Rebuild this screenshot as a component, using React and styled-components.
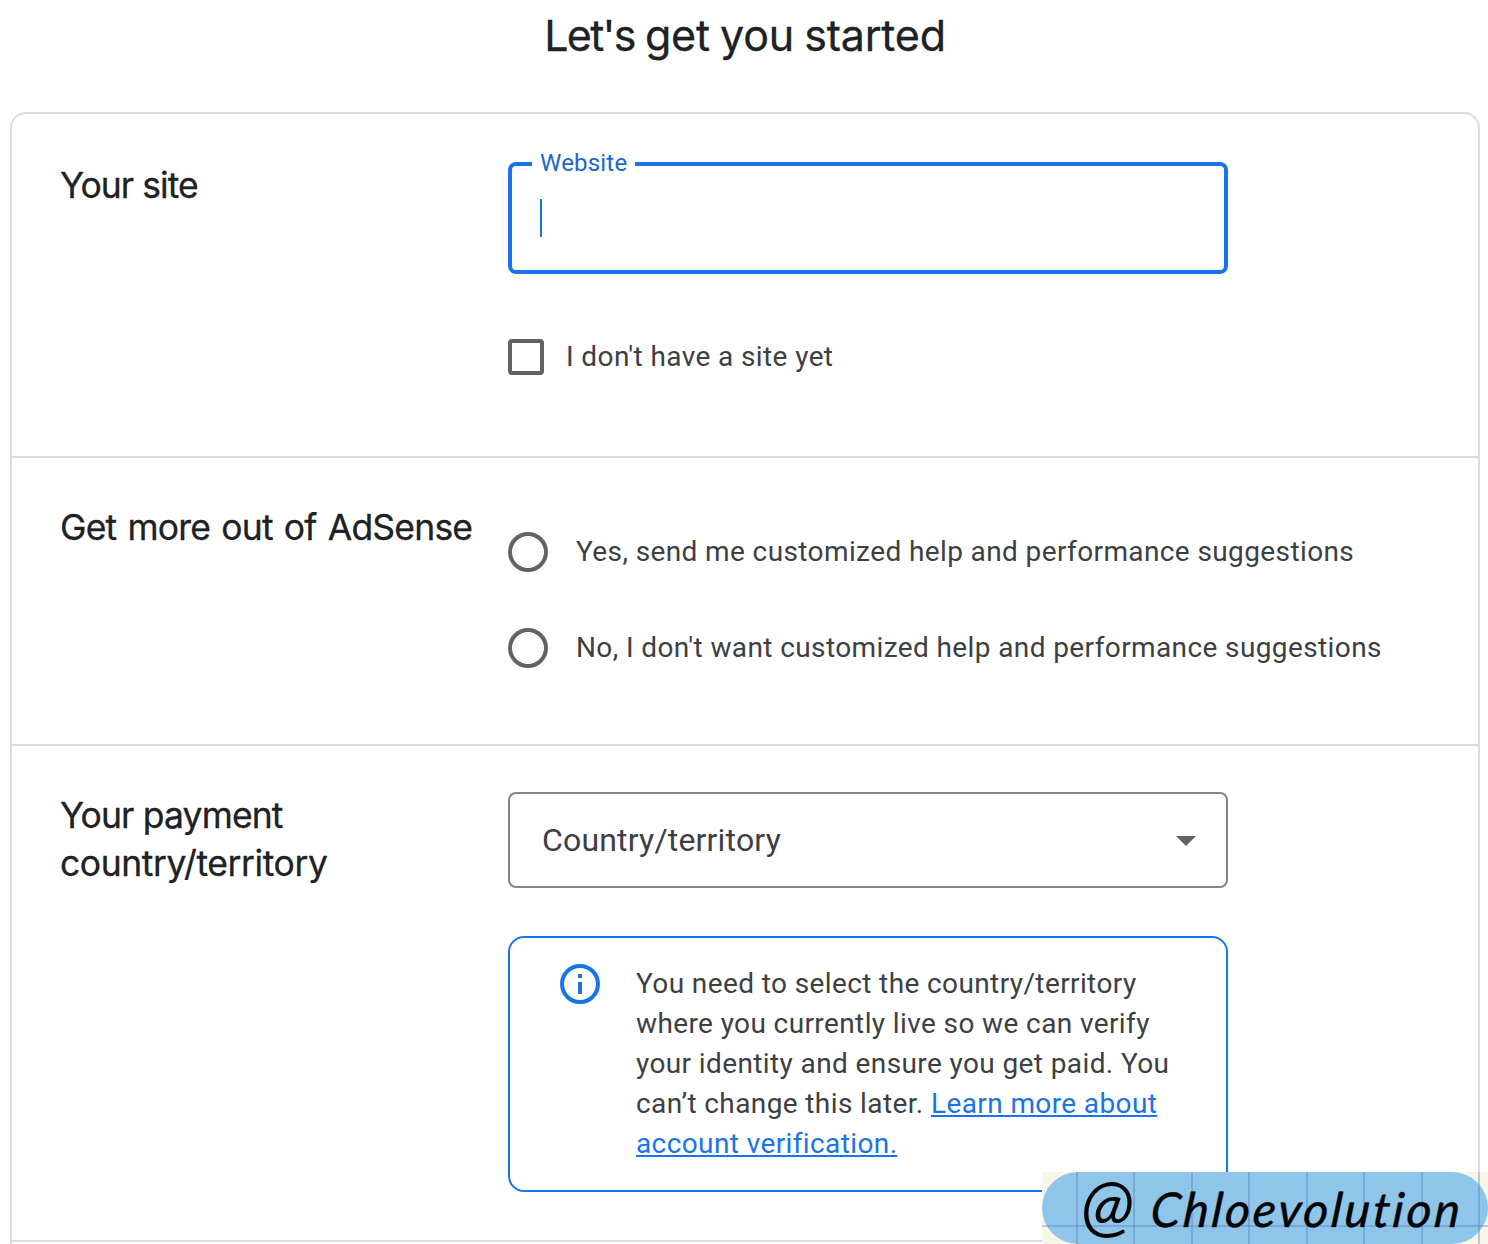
import React from "react";
import styled, { createGlobalStyle } from "styled-components";

const GlobalStyle = createGlobalStyle`
  *, *::before, *::after { box-sizing: border-box; }
  html, body { margin: 0; background: #fff; overflow: hidden; }
  body { font-family: Roboto, "Liberation Sans", sans-serif; color: #3c4043; }
`;

const Page = styled.main`
  position: relative;
  width: 1488px;
  height: 1244px;
  padding: 0 8px 0 10px;
  overflow: hidden;
`;

const Title = styled.h1`
  height: 112px;
  margin: 0;
  padding-top: 7px;
  text-align: center;
  font: 400 43px/56px Inter, "Open Sans", sans-serif;
  letter-spacing: -0.2px;
  word-spacing: -1.7px;
  color: #202124;
  -webkit-text-stroke: 0.3px #202124;
`;

const TightStart = styled.span`
  letter-spacing: -1.7px;
`;

const Card = styled.div`
  border: 2px solid #dadce0;
  border-radius: 16px;
  height: 1200px;
`;

const Section = styled.section`
  display: grid;
  grid-template-columns: 448px 1fr;
  height: ${(p) => p.$height}px;
  padding: 46px 0 0 48px;
  border-bottom: 2px solid #dadce0;
`;

const Heading = styled.h2`
  margin: 0;
  padding-top: ${(p) => p.$top || 0}px;
  font: 400 35.5px/48px Inter, "Open Sans", sans-serif;
  color: #202124;
  -webkit-text-stroke: 0.3px #202124;
`;

const HeadingLine = styled.span`
  display: block;
  white-space: nowrap;
  letter-spacing: ${(p) => p.$spacing}px;
  word-spacing: ${(p) => p.$words || 0}px;
`;

const Controls = styled.div`
  display: flex;
  flex-direction: column;
  align-items: flex-start;
  padding-top: ${(p) => p.$top || 0}px;
`;

const TextField = styled.div`
  position: relative;
  display: flex;
  align-items: center;
  width: 720px;
  height: 112px;
  padding-left: 28px;
  border: 4px solid #1a73e8;
  border-radius: 8px;
`;

const FloatingLabel = styled.label`
  position: absolute;
  left: 20px;
  top: -17px;
  width: 103px;
  padding-left: 8px;
  background: #fff;
  color: #1967d2;
  font-size: 24px;
  line-height: 28px;
  letter-spacing: 0.2px;
`;

const Caret = styled.span`
  width: 2px;
  height: 38px;
  background: #1a73e8;
`;

const Choice = styled.label`
  display: flex;
  align-items: center;
  gap: ${(p) => p.$gap}px;
  height: 40px;
  margin-top: ${(p) => p.$top}px;
  font-size: 28px;
  line-height: 40px;
  letter-spacing: 0.39px;
  white-space: nowrap;
`;

const CheckBox = styled.span`
  width: 36px;
  height: 36px;
  border: 4px solid #5f6368;
  border-radius: 4px;
`;

const Radio = styled.span`
  width: 40px;
  height: 40px;
  border: 4px solid #5f6368;
  border-radius: 50%;
`;

const Select = styled.div`
  display: flex;
  align-items: center;
  justify-content: space-between;
  width: 720px;
  height: 96px;
  padding: 0 30px 0 32px;
  border: 2px solid #80868b;
  border-radius: 8px;
  font-size: 32px;
  letter-spacing: 0.18px;
`;

const Arrow = styled.span`
  border: 10px solid transparent;
  border-top-color: #5f6368;
  border-bottom: 0;
  margin-top: 2px;
`;

const Notice = styled.div`
  display: flex;
  gap: 36px;
  width: 720px;
  height: 256px;
  margin-top: 48px;
  padding: 26px 0 0 50px;
  border: 2px solid #1a73e8;
  border-radius: 16px;
`;

const NoticeText = styled.p`
  margin: 0;
  font-size: 28px;
  line-height: 40px;
  letter-spacing: 0.39px;
  white-space: nowrap;
`;

const Link = styled.a`
  color: #1a73e8;
  text-decoration: underline;
  text-decoration-thickness: 2px;
  text-underline-offset: 2px;
`;

const Stamp = styled.div`
  position: absolute;
  right: 0;
  bottom: 0;
  width: 446px;
  height: 72px;
  background: #f8f6e8;
`;

const StampPill = styled.div`
  display: flex;
  align-items: center;
  gap: 17px;
  height: 72px;
  padding-left: 39px;
  border-radius: 36px;
  background: #8ec5e9;
  color: #050505;
  font-family: Lato, "Open Sans", sans-serif;
  font-style: italic;
  white-space: nowrap;
`;

const line = "linear-gradient(rgba(75, 115, 185, 0.35), rgba(75, 115, 185, 0.35))";
const columns = [34, 91, 149, 206, 264, 321, 379, 436];

const StampGrid = styled.div`
  position: absolute;
  inset: 0;
  background:
    ${line} 0 53px / 100% 2px no-repeat,
    ${columns.map((x) => `${line} ${x}px 0 / 2px 100% no-repeat`).join(", ")};
`;

const StampAt = styled.span`
  position: relative;
  top: -4px;
  font-size: 69px;
  line-height: 72px;
`;

const StampName = styled.span`
  position: relative;
  top: 1px;
  font-size: 48px;
  line-height: 72px;
  letter-spacing: 2.8px;
  transform: skewX(-5deg);
  -webkit-text-stroke: 0.5px #050505;
`;

function InfoIcon() {
  return (
    <svg width="40" height="40" viewBox="0 0 40 40" fill="none">
      <circle cx="20" cy="20" r="18" stroke="#1a73e8" strokeWidth="4" />
      <path d="M18 10h4v4h-4zM18 18h4v12h-4z" fill="#1a73e8" />
    </svg>
  );
}

export default function App() {
  return (
    <>
      <GlobalStyle />
      <Page>
        <Title>
          <TightStart>Let's</TightStart> get you started
        </Title>
        <Card>
          <Section $height={344}>
            <Heading $top={2}>
              <HeadingLine $spacing={-0.95}>Your site</HeadingLine>
            </Heading>
            <Controls $top={2}>
              <TextField>
                <FloatingLabel>Website</FloatingLabel>
                <Caret />
              </TextField>
              <Choice $gap={22} $top={63}>
                <CheckBox />
                I don't have a site yet
              </Choice>
            </Controls>
          </Section>
          <Section $height={288}>
            <Heading>
              <HeadingLine $spacing={-0.8} $words={1.9}>Get more out of AdSense</HeadingLine>
            </Heading>
            <Controls>
              <Choice $gap={28} $top={28}>
                <Radio />
                Yes, send me customized help and performance suggestions
              </Choice>
              <Choice $gap={28} $top={56}>
                <Radio />
                No, I don't want customized help and performance suggestions
              </Choice>
            </Controls>
          </Section>
          <Section $height={496}>
            <Heading>
              <HeadingLine $spacing={-0.85}>Your payment</HeadingLine>
              <HeadingLine $spacing={-0.42}>country/territory</HeadingLine>
            </Heading>
            <Controls>
              <Select>
                Country/territory
                <Arrow />
              </Select>
              <Notice>
                <InfoIcon />
                <NoticeText>
                  You need to select the country/territory
                  <br />
                  where you currently live so we can verify
                  <br />
                  your identity and ensure you get paid. You
                  <br />
                  can’t change this later. <Link>Learn more about
                  <br />
                  account verification.</Link>
                </NoticeText>
              </Notice>
            </Controls>
          </Section>
        </Card>
        <Stamp>
          <StampPill>
            <StampGrid />
            <StampAt>@</StampAt>
            <StampName>Chloevolution</StampName>
          </StampPill>
        </Stamp>
      </Page>
    </>
  );
}
